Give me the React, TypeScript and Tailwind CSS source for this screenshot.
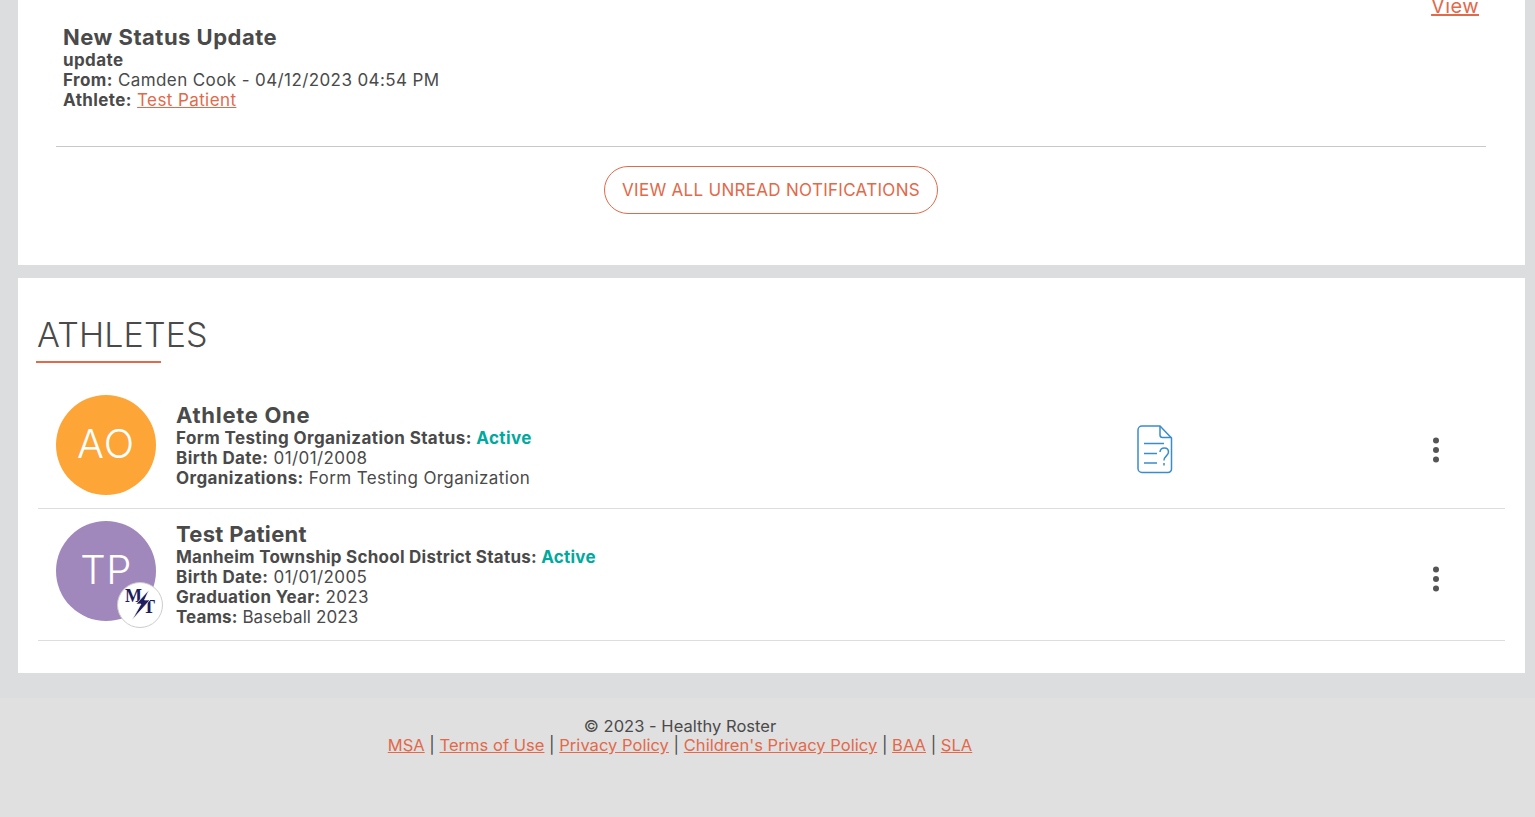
import React from "react";

const font = "font-['Inter','Liberation_Sans',sans-serif]";
const link = "text-[#e2694a] underline";

function Kebab() {
  return (
    <svg width="8" height="26" viewBox="0 0 8 26" className="text-[#555]" fill="currentColor">
      <circle cx="4" cy="3.5" r="3" />
      <circle cx="4" cy="13" r="3" />
      <circle cx="4" cy="22.5" r="3" />
    </svg>
  );
}

function FormIcon() {
  return (
    <svg width="36" height="49" viewBox="0 0 36 49" fill="none" stroke="#3a8ccb" strokeWidth="1.5">
      <path d="M23 1H5A4 4 0 0 0 1 5v38.500a4 4 0 0 0 4 4h26a3.500 3.500 0 0 0 3.500-3.500V13Z" />
      <path d="M23 1v9a2.500 2.500 0 0 0 2.500 2.500h9" />
      <path d="M7 18.500h20M7 28.500h13M7 38h13" />
      <path d="M23 27c.4-5.500 8.500-5.500 8.500 0 0 4-4.500 3.800-4.500 8.500M27 38v2.500" />
    </svg>
  );
}

function MtLogo() {
  return (
    <span className="absolute left-[61px] top-[61px] flex h-[46px] w-[46px] items-center justify-center rounded-full border border-[#cccccc] bg-white">
      <svg width="34" height="32" viewBox="0 0 34 32">
        <text x="2" y="13" fontFamily="Liberation Serif, serif" fontWeight="700" fontSize="18" fill="#1f1d5c">M</text>
        <text x="20" y="24" fontFamily="Liberation Serif, serif" fontWeight="700" fontSize="18" fill="#1f1d5c">T</text>
        <path d="M26 1 L13 15 L18 15 L9 31 L27 11 L21.500 11 Z" fill="#1f1d5c" stroke="#fff" strokeWidth="0.7" />
      </svg>
    </span>
  );
}

export default function App() {
  return (
    <div className={`${font} h-[817px] w-full overflow-hidden bg-[#dcddde] text-[17px] leading-[20px] tracking-[0.4px] text-[#4a4a4a]`}>
      <div className="ml-[18px] mr-[10px] h-[265px] bg-white pl-[38px] pr-[39px]">
        <div className="flex h-[147px] border-b border-[#c9c9c9] pl-[7px] pr-[7px]">
          <div className="flex-1 pt-[25px]">
            <div className="text-[22px] font-bold leading-[25px] tracking-[0.5px]">New Status Update</div>
            <div className="font-bold">update</div>
            <div><b>From:</b> Camden Cook - 04/12/2023 04:54 PM</div>
            <div><b>Athlete:</b> <a className={link}>Test Patient</a></div>
          </div>
          <a className={`${link} -mt-[4px] h-[20px] text-[20px]`}>View</a>
        </div>
        <div className="flex justify-center pt-[19px]">
          <div className="flex h-[48px] w-[334px] items-center justify-center rounded-full border border-[#e2694a] tracking-[0.3px] text-[#e2694a]">
            VIEW ALL UNREAD NOTIFICATIONS
          </div>
        </div>
      </div>

      <div className="ml-[18px] mr-[10px] mt-[13px] h-[395px] bg-white px-[20px]">
        <div className="pt-[39px]">
          <h2 className="-ml-px text-[34px] font-light leading-[36px] tracking-[0.15px] text-[#4a4a4a]">ATHLETES</h2>
          <div className="-ml-[2px] mt-[8px] h-[2px] w-[125px] bg-[#e2694a]" />
        </div>
        <div className="mt-[32px] flex h-[114px] items-start border-b border-[#dddddd] pl-[18px]">
          <div className="flex h-[100px] w-[100px] shrink-0 items-center justify-center rounded-full bg-[#fda536] pb-[2px] text-[40px] font-light tracking-[1px] text-white">AO</div>
          <div className="ml-[20px] flex-1 pt-[8px]">
            <div className="text-[22px] font-bold leading-[25px] tracking-[0.7px]">Athlete One</div>
            <div className="font-bold">Form Testing Organization Status: <span className="text-[#00a99d]">Active</span></div>
            <div><b>Birth Date:</b> 01/01/2008</div>
            <div><b>Organizations:</b> Form Testing Organization</div>
          </div>
          <div className="mr-[65px] mt-[30px] flex w-[303px] items-start justify-between">
            <FormIcon />
            <div className="mt-[12px]"><Kebab /></div>
          </div>
        </div>
        <div className="mt-[12px] flex h-[120px] items-start border-b border-[#dddddd] pl-[18px]">
          <div className="relative flex h-[100px] w-[100px] shrink-0 items-center justify-center rounded-full bg-[#a088bd] pb-[2px] text-[40px] font-light tracking-[0.5px] text-white">
            TP
            <MtLogo />
          </div>
          <div className="ml-[20px] flex-1 pt-px">
            <div className="text-[22px] font-bold leading-[25px] tracking-[0.3px]">Test Patient</div>
            <div className="font-bold tracking-[0.25px]">Manheim Township School District Status: <span className="text-[#00a99d]">Active</span></div>
            <div><b>Birth Date:</b> 01/01/2005</div>
            <div className="tracking-[0.3px]"><b>Graduation Year:</b> 2023</div>
            <div className="tracking-[0.1px]"><b>Teams:</b> Baseball 2023</div>
          </div>
          <div className="mr-[65px] mt-[45px]"><Kebab /></div>
        </div>
      </div>

      <div className="mt-[25px] h-[119px] bg-[#e0e0e0] pt-[19px] text-[16.5px] leading-[19px] tracking-[0.03px]">
        <div className="w-[1360px] text-center">
          <div>© 2023 - Healthy Roster</div>
          <div>
            <a className={link}>MSA</a> | <a className={link}>Terms of Use</a> | <a className={link}>Privacy Policy</a> | <a className={link}>Children's Privacy Policy</a> | <a className={link}>BAA</a> | <a className={link}>SLA</a>
          </div>
        </div>
      </div>
    </div>
  );
}
